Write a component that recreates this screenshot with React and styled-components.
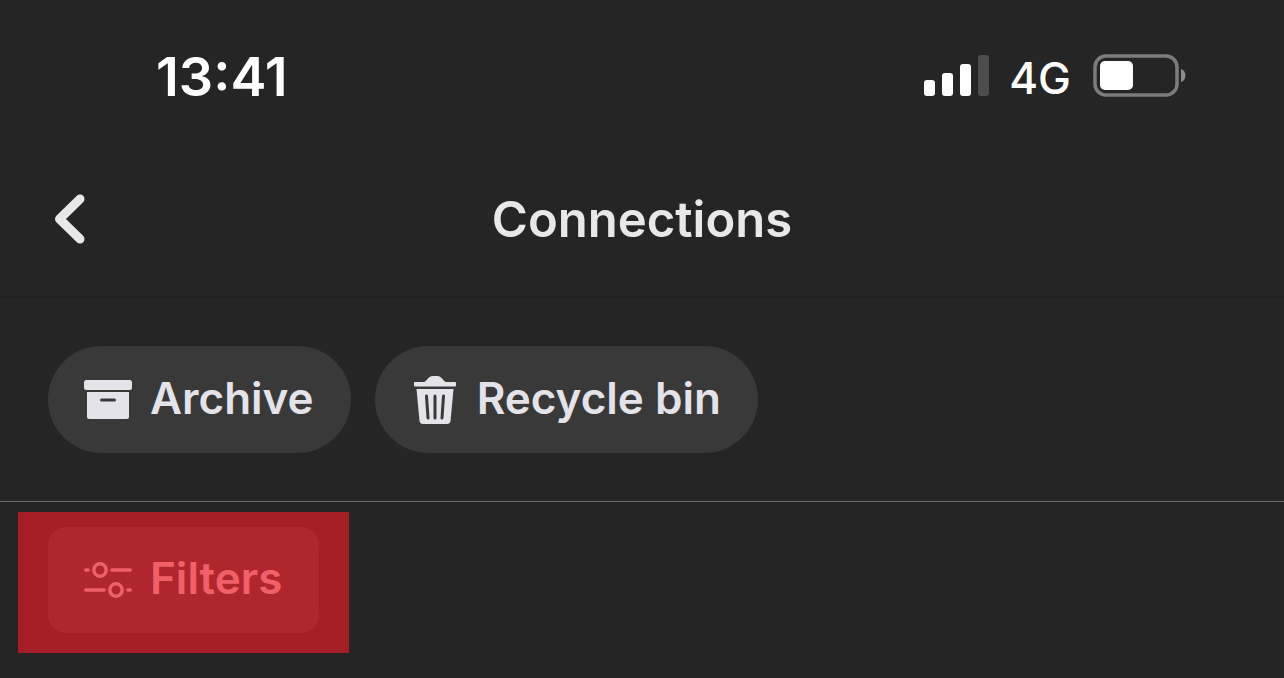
import React from "react"
import styled, { createGlobalStyle } from "styled-components"

const GlobalStyle = createGlobalStyle`
  * {
    box-sizing: border-box;
  }

  body {
    margin: 0;
    background: #252525;
    color: #e8e8ea;
    font-family: Inter, "Liberation Sans", sans-serif;
  }
`

function App() {
  return (
    <>
      <GlobalStyle />
      <StatusBar>
        <Time>13:41</Time>
        <Indicators>
          <SignalIcon />
          <Network>4G</Network>
          <BatteryIcon />
        </Indicators>
      </StatusBar>
      <Header>
        <BackButton type="button" aria-label="Back">
          <BackIcon />
        </BackButton>
        <Title>Connections</Title>
      </Header>
      <Actions>
        <ActionButton type="button">
          <ArchiveIcon />
          <Label>Archive</Label>
        </ActionButton>
        <ActionButton type="button">
          <BinIcon />
          <Label>Recycle bin</Label>
        </ActionButton>
      </Actions>
      <FilterBar>
        <Highlight>
          <FilterButton type="button">
            <FiltersIcon />
            <Label>Filters</Label>
          </FilterButton>
        </Highlight>
      </FilterBar>
    </>
  )
}

export default App

function SignalIcon() {
  return (
    <svg width="65" height="42" viewBox="0 0 65 42" fill="#fff" aria-hidden="true">
      <rect x="0" y="25" width="11" height="16" rx="3" />
      <rect x="18" y="18" width="11" height="23" rx="3" />
      <rect x="36" y="9" width="11" height="32" rx="3" />
      <rect x="54" y="0" width="11" height="41" rx="3" fill="#4d4d4d" />
    </svg>
  )
}

function BatteryIcon() {
  return (
    <svg width="95" height="44" viewBox="0 0 95 44" aria-hidden="true">
      <rect x="2" y="2" width="82" height="39" rx="11" fill="none" stroke="#7c7c7c" strokeWidth="3.500" />
      <rect x="7" y="7" width="33" height="29" rx="5" fill="#fff" />
      <path d="M88 15C94 17 94 26 88 28Z" fill="#8c8c8c" />
    </svg>
  )
}

function BackIcon() {
  return (
    <svg width="32" height="50" viewBox="0 0 32 50" aria-hidden="true">
      <path
        d="M26 5L5.500 25L26 45"
        fill="none"
        stroke="#e8e8ea"
        strokeWidth="9"
        strokeLinecap="round"
        strokeLinejoin="round"
      />
    </svg>
  )
}

function ArchiveIcon() {
  return (
    <svg width="48" height="48" viewBox="0 0 48 48" fill="#e5e3ea" aria-hidden="true">
      <rect x="0" y="4" width="48" height="10" rx="2.500" />
      <path d="M3 16H45V41Q45 43 43 43H5Q3 43 3 41Z" />
      <path d="M17.500 24H30.500" stroke="#39393a" strokeWidth="3" strokeLinecap="round" />
    </svg>
  )
}

function BinIcon() {
  return (
    <svg width="48" height="48" viewBox="0 0 48 48" fill="#e5e3ea" aria-hidden="true">
      <path d="M4 6H13C16 5 17 0 22 0H26C31 0 32 5 35 6H44Q45 6 45 7V9.500Q45 10.500 44 10.500H4Q3 10.500 3 9.500V7Q3 6 4 6Z" />
      <path d="M5.500 13H42.500L39.500 45Q39 48 36 48H12Q9 48 8.500 45Z" />
      <path
        d="M15.500 20L17 42M24 20V42M32.500 20L31 42"
        stroke="#39393a"
        strokeWidth="3"
        strokeLinecap="round"
      />
    </svg>
  )
}

function FiltersIcon() {
  return (
    <svg width="48" height="48" viewBox="0 0 48 48" fill="none" stroke="#ef6069" strokeWidth="3.500" aria-hidden="true">
      <path d="M1.800 14H4M28 14H46.200M1.800 34H20M44 34H46.200" strokeLinecap="round" />
      <circle cx="16" cy="14" r="6.200" />
      <circle cx="32" cy="34" r="6.200" />
    </svg>
  )
}

const StatusBar = styled.div`
  display: flex;
  align-items: center;
  justify-content: space-between;
  height: 152px;
  padding: 0 96px 0 156px;
  color: #fff;
`

const Time = styled.time`
  font-size: 54px;
  font-weight: 600;
`

const Indicators = styled.div`
  display: flex;
  align-items: center;
  gap: 20px;
`

const Network = styled.span`
  padding: 4px 2px 0 0;
  font-size: 44px;
  font-weight: 500;
`

const Header = styled.header`
  display: grid;
  grid-template-columns: 1fr auto 1fr;
  align-items: center;
  height: 146px;
  padding: 0 54px 10px;
  border-bottom: 2px solid #222;
`

const BackButton = styled.button`
  display: flex;
  justify-self: start;
  padding: 0;
  border: none;
  background: none;
`

const Title = styled.h1`
  margin: 0;
  font-size: 49px;
  font-weight: 600;
`

const Actions = styled.div`
  display: flex;
  gap: 24px;
  padding: 48px;
  border-bottom: 1px solid #6a6a6a;
`

const ActionButton = styled.button`
  display: flex;
  align-items: center;
  gap: 18px;
  height: 107px;
  padding: 0 37px 0 36px;
  border: none;
  border-radius: 54px;
  background: #39393a;
  color: #e5e3ea;
  font-family: inherit;
  font-size: 44px;
  font-weight: 600;
  white-space: nowrap;
`

const Label = styled.span`
  padding-bottom: 4px;
`

const FilterBar = styled.div`
  display: flex;
  padding: 10px 18px 24px;
`

const Highlight = styled.div`
  padding: 15px 30px 20px;
  background: #a61e25;
`

const FilterButton = styled(ActionButton)`
  height: 106px;
  border-radius: 18px;
  background: #af272d;
  color: #ef6069;
`
